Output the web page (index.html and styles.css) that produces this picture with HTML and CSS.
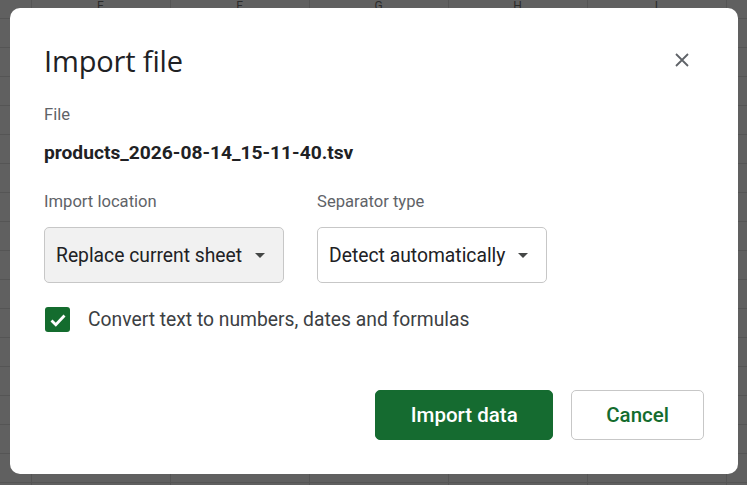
FILE: index.html
```html
<!DOCTYPE html>
<html lang="en">
<head>
    <meta charset="UTF-8">
    <meta name="viewport" content="width=device-width, initial-scale=1.0">
    <title>Import file</title>
    <link rel="stylesheet" href="styles.css">
</head>
<body>
    <!-- arkusz w tle -->
    <div class="sheet">
        <div class="col-head"></div>
        <div class="col-head">E</div>
        <div class="col-head">F</div>
        <div class="col-head">G</div>
        <div class="col-head">H</div>
        <div class="col-head">I</div>
    </div>

    <div class="dialog">
        <div class="dialog-header">
            <h1 class="dialog-title">Import file</h1>
            <span class="close-icon">
                <svg width="14" height="14" viewBox="0 0 14 14">
                    <path d="M1 1 L13 13 M13 1 L1 13" stroke="#5f6368" stroke-width="1.8" fill="none"/>
                </svg>
            </span>
        </div>

        <div class="field-label">File</div>
        <div class="file-name">products_2026-08-14_15-11-40.tsv</div>

        <div class="options">
            <div class="option">
                <div class="field-label">Import location</div>
                <div class="select select-grey">
                    <span>Replace current sheet</span>
                    <span class="arrow"></span>
                </div>
            </div>
            <div class="option">
                <div class="field-label">Separator type</div>
                <div class="select">
                    <span>Detect automatically</span>
                    <span class="arrow"></span>
                </div>
            </div>
        </div>

        <label class="check-row">
            <span class="checkbox">
                <svg width="18" height="18" viewBox="0 0 18 18">
                    <path d="M2.5 9.5 L6.8 13.8 L15.5 4.5" stroke="#fff" stroke-width="2.8" fill="none"/>
                </svg>
            </span>
            Convert text to numbers, dates and formulas
        </label>

        <div class="button-group">
            <button class="button button-primary">Import data</button>
            <button class="button">Cancel</button>
        </div>
    </div>
</body>
</html>
```

FILE: styles.css
```css
body {
    margin: 0;
    height: 100vh;
    overflow: hidden;
    font-family: Roboto, Arial, sans-serif;
    background-color: #606060;
    background-image:
        linear-gradient(#555 1px, transparent 1px),
        linear-gradient(90deg, #555 1px, transparent 1px);
    background-size: 139px 29px;
    background-position: 31px 18px;
}

.sheet {   /* naglowki kolumn */
    display: flex;
    margin-left: -108px;
}

.col-head {
    width: 139px;
    flex: none;
    height: 18px;
    text-align: center;
    font-size: 12px;
    line-height: 12px;
    color: #2b2b2b;
}

.dialog {
    position: absolute;
    left: 10px;
    top: 8px;
    width: 728px;
    height: 466px;
    box-sizing: border-box;
    padding: 35px 34px 0 34px;
    background: white;
    border-radius: 10px;
    color: #202124;
}

.dialog-header {
    display: flex;
    align-items: center;
    justify-content: space-between;
}

.dialog-title {
    margin: 0;
    font-family: "Open Sans", Roboto, sans-serif;
    font-weight: 400;
    font-size: 29px;
    line-height: 36px;
    letter-spacing: -0.15px;
}

.close-icon {
    display: flex;
    margin-right: 15px;
    margin-top: -2px;
}

.field-label {
    font-size: 16.6px;
    line-height: 20px;
    color: #5f6368;
}

.dialog-header + .field-label {
    margin-top: 26px;
}

.file-name {
    margin-top: 16px;
    font-size: 19.2px;
    line-height: 24px;
    font-weight: 700;
}

.options {
    display: flex;
    gap: 33px;
    margin-top: 27px;
}

.option .field-label {
    margin-bottom: 15px;
}

.select {
    display: flex;
    align-items: center;
    gap: 13px;
    height: 56px;
    box-sizing: border-box;
    padding: 0 18px 0 11px;
    border: 1px solid #c7c7c7;
    border-radius: 5px;
    font-size: 19.3px;
    color: #202124;
}

.select-grey {
    background: #f1f1f1;
}

.arrow {
    width: 0;
    height: 0;
    border-left: 5px solid transparent;
    border-right: 5px solid transparent;
    border-top: 5px solid #444746;
}

.check-row {
    display: flex;
    align-items: center;
    gap: 18px;
    margin-top: 24px;
    font-size: 19.3px;
    color: #3c4043;
}

.checkbox {
    display: flex;
    align-items: center;
    justify-content: center;
    width: 25px;
    height: 25px;
    background: #146c2e;
    border-radius: 3px;
    margin-left: 1px;
}

.button-group {
    display: flex;
    justify-content: flex-end;
    gap: 18px;
    margin-top: 58px;
}

.button {
    height: 50px;
    padding: 0 34px;
    background: white;
    color: #146c2e;
    border: 1px solid #c7c7c7;
    border-radius: 5px;
    font-family: Roboto, Arial, sans-serif;
    font-size: 20.5px;
    font-weight: 500;
    cursor: pointer;
}

.button-primary {
    width: 178px;
    background: #156b30;
    border-color: #156b30;
    color: white;
}
```
